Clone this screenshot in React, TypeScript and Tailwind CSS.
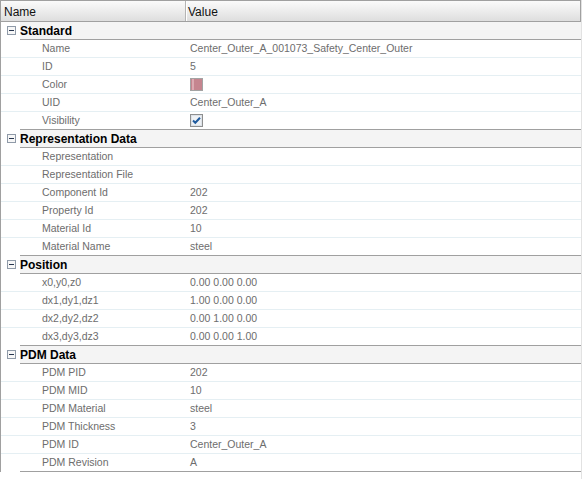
import type { ReactNode } from 'react'

type Row = [string, ReactNode]

interface Group {
  title: string
  rows: Row[]
}

const Swatch = () => (
  <div className="flex h-[13px] w-[13px] border border-[#a3a3a3] bg-[#c5858f]">
    <div className="ml-[1px] w-[2px] bg-[#dcaab2]" />
  </div>
)

const Check = () => (
  <svg width="13" height="13" viewBox="0 0 13 13">
    <rect x="0.5" y="0.5" width="12" height="12" fill="#ffffff" stroke="#8e8f8f" />
    <rect x="1.5" y="1.5" width="10" height="10" fill="#eef1f4" stroke="#dde2e8" />
    <polyline points="3,6.5 5.3,8.8 10,3.8" fill="none" stroke="#1f5b9e" strokeWidth="2" />
  </svg>
)

const Minus = () => (
  <svg width="9" height="9" viewBox="0 0 9 9">
    <rect x="0.5" y="0.5" width="8" height="8" fill="#f7f7f7" stroke="#8f9aa8" />
    <rect x="2" y="4" width="5" height="1" fill="#27364f" />
  </svg>
)

const groups: Group[] = [
  {
    title: 'Standard',
    rows: [
      ['Name', 'Center_Outer_A_001073_Safety_Center_Outer'],
      ['ID', '5'],
      ['Color', <Swatch />],
      ['UID', 'Center_Outer_A'],
      ['Visibility', <Check />],
    ],
  },
  {
    title: 'Representation Data',
    rows: [
      ['Representation', ''],
      ['Representation File', ''],
      ['Component Id', '202'],
      ['Property Id', '202'],
      ['Material Id', '10'],
      ['Material Name', 'steel'],
    ],
  },
  {
    title: 'Position',
    rows: [
      ['x0,y0,z0', '0.00 0.00 0.00'],
      ['dx1,dy1,dz1', '1.00 0.00 0.00'],
      ['dx2,dy2,dz2', '0.00 1.00 0.00'],
      ['dx3,dy3,dz3', '0.00 0.00 1.00'],
    ],
  },
  {
    title: 'PDM Data',
    rows: [
      ['PDM PID', '202'],
      ['PDM MID', '10'],
      ['PDM Material', 'steel'],
      ['PDM Thickness', '3'],
      ['PDM ID', 'Center_Outer_A'],
      ['PDM Revision', 'A'],
    ],
  },
]

export default function App() {
  return (
    <div className="h-[479px] w-[582px] overflow-hidden border-r border-[#e2e2e2] bg-white font-['Liberation_Sans',Arial,sans-serif]">
      <div className="w-[581px] border-l border-[#a0a0a0]">
        {/* Column header */}
        <div className="flex h-[22px] border-y border-r border-[#a0a0a0] bg-gradient-to-b from-[#fbfbfb] to-[#dedede] text-[12px] text-[#111]">
          <div className="flex w-[185px] items-center border-r border-[#b4b4b4] pl-[3px] pt-[2px]">Name</div>
          <div className="flex items-center border-l border-white pl-[1px] pt-[2px]">Value</div>
        </div>

        {groups.map((g) => (
          <div key={g.title}>
            <div className="flex h-[18px]">
              <div className="flex w-[19px] items-center border-b border-transparent pl-[6px]">
                <Minus />
              </div>
              <div className="flex flex-1 items-center border-b border-[#a0a0a0] bg-[#f4f4f4] text-[12px] font-bold text-black">
                {g.title}
              </div>
            </div>
            {g.rows.map(([label, value], i) => {
              const last = i === g.rows.length - 1
              return (
                <div key={label} className={`flex h-[18px] ${last ? '' : 'border-b border-[#e5eff3]'}`}>
                  <div className={`w-[19px] ${last ? 'border-b border-transparent' : ''}`} />
                  <div className={`flex flex-1 items-center text-[10.5px] text-[#6d6d6d] ${last ? 'border-b border-[#a0a0a0]' : ''}`}>
                    <div className="w-[166px] pl-[22px]">{label}</div>
                    <div className="flex items-center pl-[4px]">{value}</div>
                  </div>
                </div>
              )
            })}
          </div>
        ))}
      </div>
    </div>
  )
}
